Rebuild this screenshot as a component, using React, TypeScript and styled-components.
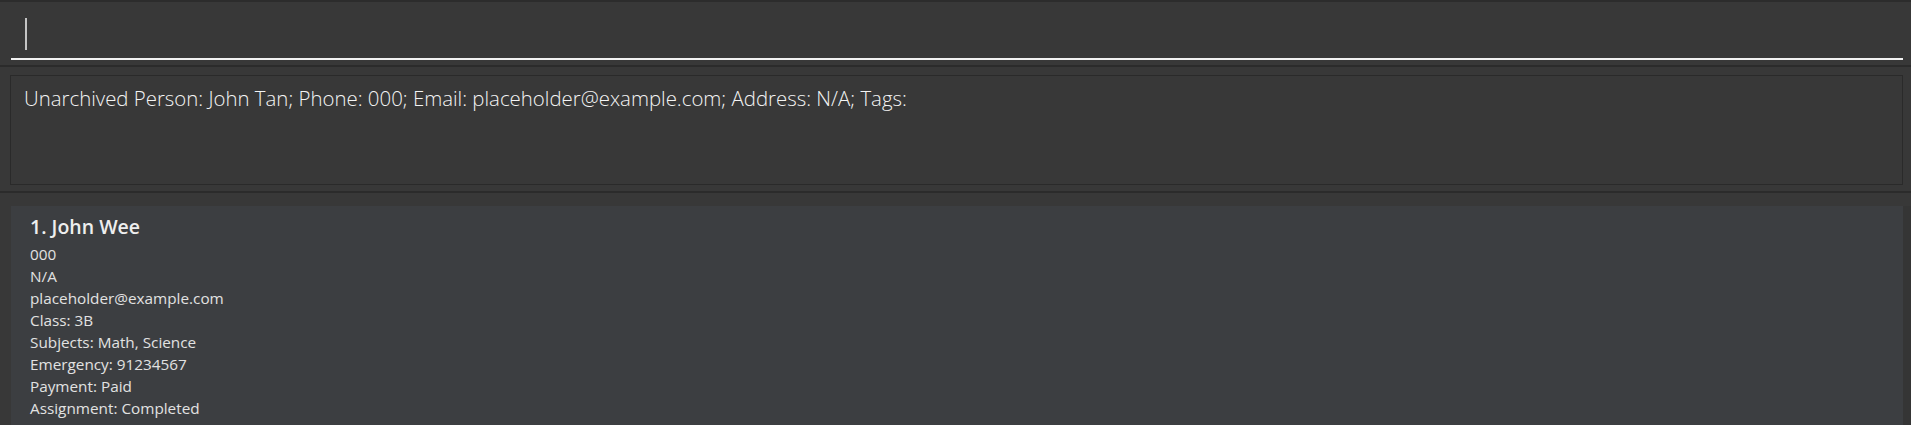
import React from "react";
import styled, { createGlobalStyle } from "styled-components";

const GlobalStyle = createGlobalStyle`
  html, body {
    margin: 0;
    padding: 0;
    background: #383838;
    overflow: hidden;
  }
  #root {
    height: 425px;
  }
`;

type Person = {
  name: string;
  details: string[];
};

const people: Person[] = [
  {
    name: "John Wee",
    details: [
      "000",
      "N/A",
      "placeholder@example.com",
      "Class: 3B",
      "Subjects: Math, Science",
      "Emergency: 91234567",
      "Payment: Paid",
      "Assignment: Completed",
    ],
  },
];

const resultText =
  "Unarchived Person: John Tan; Phone: 000; Email: placeholder@example.com; Address: N/A; Tags:";

export default function App() {
  return (
    <>
      <GlobalStyle />
      <Window>
        <CommandPane>
          <CommandInput>
            <Caret />
          </CommandInput>
        </CommandPane>
        <Divider />
        <ResultPane>
          <ResultBox>
            <ResultText>{resultText}</ResultText>
          </ResultBox>
        </ResultPane>
        <Divider />
        <ListPane>
          <ListColumn>
            {people.map((person, index) => (
              <Card key={person.name}>
                <CardTitle>
                  {index + 1}. {person.name}
                </CardTitle>
                {person.details.map((line) => (
                  <CardLine key={line}>{line}</CardLine>
                ))}
              </Card>
            ))}
          </ListColumn>
          <ScrollTrack />
        </ListPane>
      </Window>
    </>
  );
}

const Window = styled.div`
  height: 425px;
  display: flex;
  flex-direction: column;
  background: #383838;
  border-top: 2px solid #2c2c2c;
  box-sizing: border-box;
  overflow: hidden;
`;

const CommandPane = styled.div`
  height: 63px;
  padding: 0 8px 0 11px;
  display: flex;
  box-sizing: border-box;
`;

const CommandInput = styled.div`
  flex: 1;
  height: 58px;
  border-bottom: 2px solid #f2f2f2;
  padding: 16px 0 0 14px;
  box-sizing: border-box;
`;

const Caret = styled.span`
  display: block;
  width: 2px;
  height: 32px;
  background: #c4c4c4;
`;

const Divider = styled.div`
  height: 2px;
  flex-shrink: 0;
  background: #2b2b2b;
`;

const ResultPane = styled.div`
  height: 124px;
  padding: 8px 8px 0 10px;
  box-sizing: border-box;
  flex-shrink: 0;
`;

const ResultBox = styled.div`
  height: 110px;
  border: 1px solid #2a2a2a;
  box-sizing: border-box;
  padding: 8px 13px;
`;

const ResultText = styled.div`
  font-family: "Open Sans", "Noto Sans", sans-serif;
  font-weight: 300;
  font-size: 20.4px;
  line-height: 28px;
  color: #f4f4f4;
  white-space: nowrap;
`;

const ListPane = styled.div`
  flex: 1;
  display: flex;
  padding-top: 13px;
  padding-left: 11px;
  min-height: 0;
`;

const ListColumn = styled.div`
  flex: 1;
  display: flex;
  flex-direction: column;
`;

const ScrollTrack = styled.div`
  width: 8px;
  background: #353535;
`;

const Card = styled.div`
  background: #3c3e41;
  padding: 8px 19px 12px;
  display: flex;
  flex-direction: column;
  flex: 1;
`;

const CardTitle = styled.div`
  font-family: "Open Sans", "Noto Sans", sans-serif;
  font-weight: 600;
  font-size: 19.5px;
  line-height: 26px;
  color: #eeeeee;
  margin-bottom: 3px;
`;

const CardLine = styled.div`
  font-family: "Open Sans", "Noto Sans", sans-serif;
  font-size: 15.3px;
  line-height: 22px;
  color: #e2e2e2;
`;
